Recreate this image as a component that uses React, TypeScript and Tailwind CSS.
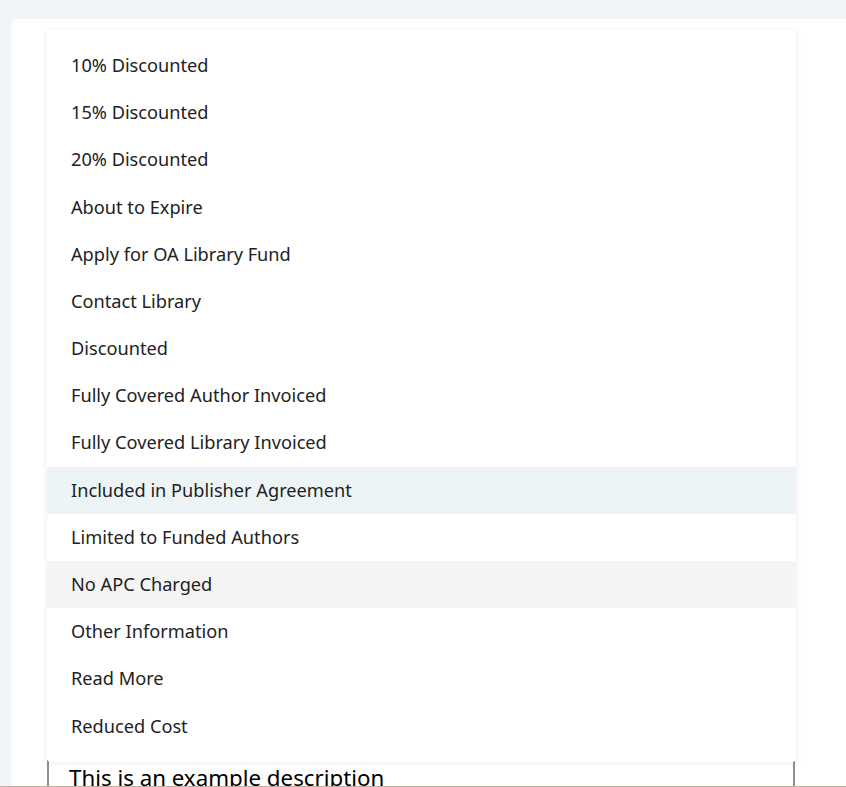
import React from 'react';

const options = [
  '10% Discounted',
  '15% Discounted',
  '20% Discounted',
  'About to Expire',
  'Apply for OA Library Fund',
  'Contact Library',
  'Discounted',
  'Fully Covered Author Invoiced',
  'Fully Covered Library Invoiced',
  'Included in Publisher Agreement',
  'Limited to Funded Authors',
  'No APC Charged',
  'Other Information',
  'Read More',
  'Reduced Cost',
];

export default function App() {
  const selected = 'Included in Publisher Agreement';
  const hovered = 'No APC Charged';

  return (
    <div
      className="h-[787px] overflow-hidden bg-[#f1f5f8] pt-[19px] pl-[11px] border-b border-[#bdb1a4]"
      style={{ fontFamily: '"Noto Sans", "Open Sans", sans-serif' }}
    >
      <div className="h-full bg-white rounded-tl-lg pt-[11px] pl-[36px]">
        <div className="relative w-[749px]">
          {/* form area hidden under the open menu */}
          <div className="h-[730px]" />

          <ul className="absolute top-0 left-0 z-10 w-[749px] bg-white rounded-sm shadow-[0_1px_6px_rgba(0,0,0,0.08)] py-3">
            {options.map((opt) => {
              const bg =
                opt === selected ? 'bg-[#ecf4f6]' : opt === hovered ? 'bg-[#f4f4f4]' : 'bg-white';
              return (
                <li
                  key={opt}
                  className={`h-[47.2px] flex items-center px-6 text-[18.2px] text-[#222222] ${bg}`}
                >
                  {opt}
                </li>
              );
            })}
          </ul>

          <textarea
            readOnly
            defaultValue="This is an example description"
            className="block w-[748px] h-[120px] resize-none border-x-2 border-[#8f8f8f] bg-white pl-5 pt-[4px] text-[22.3px] leading-7 text-black outline-none"
            style={{ fontFamily: '"Noto Sans", "Open Sans", sans-serif' }}
          />
        </div>
      </div>
    </div>
  );
}
